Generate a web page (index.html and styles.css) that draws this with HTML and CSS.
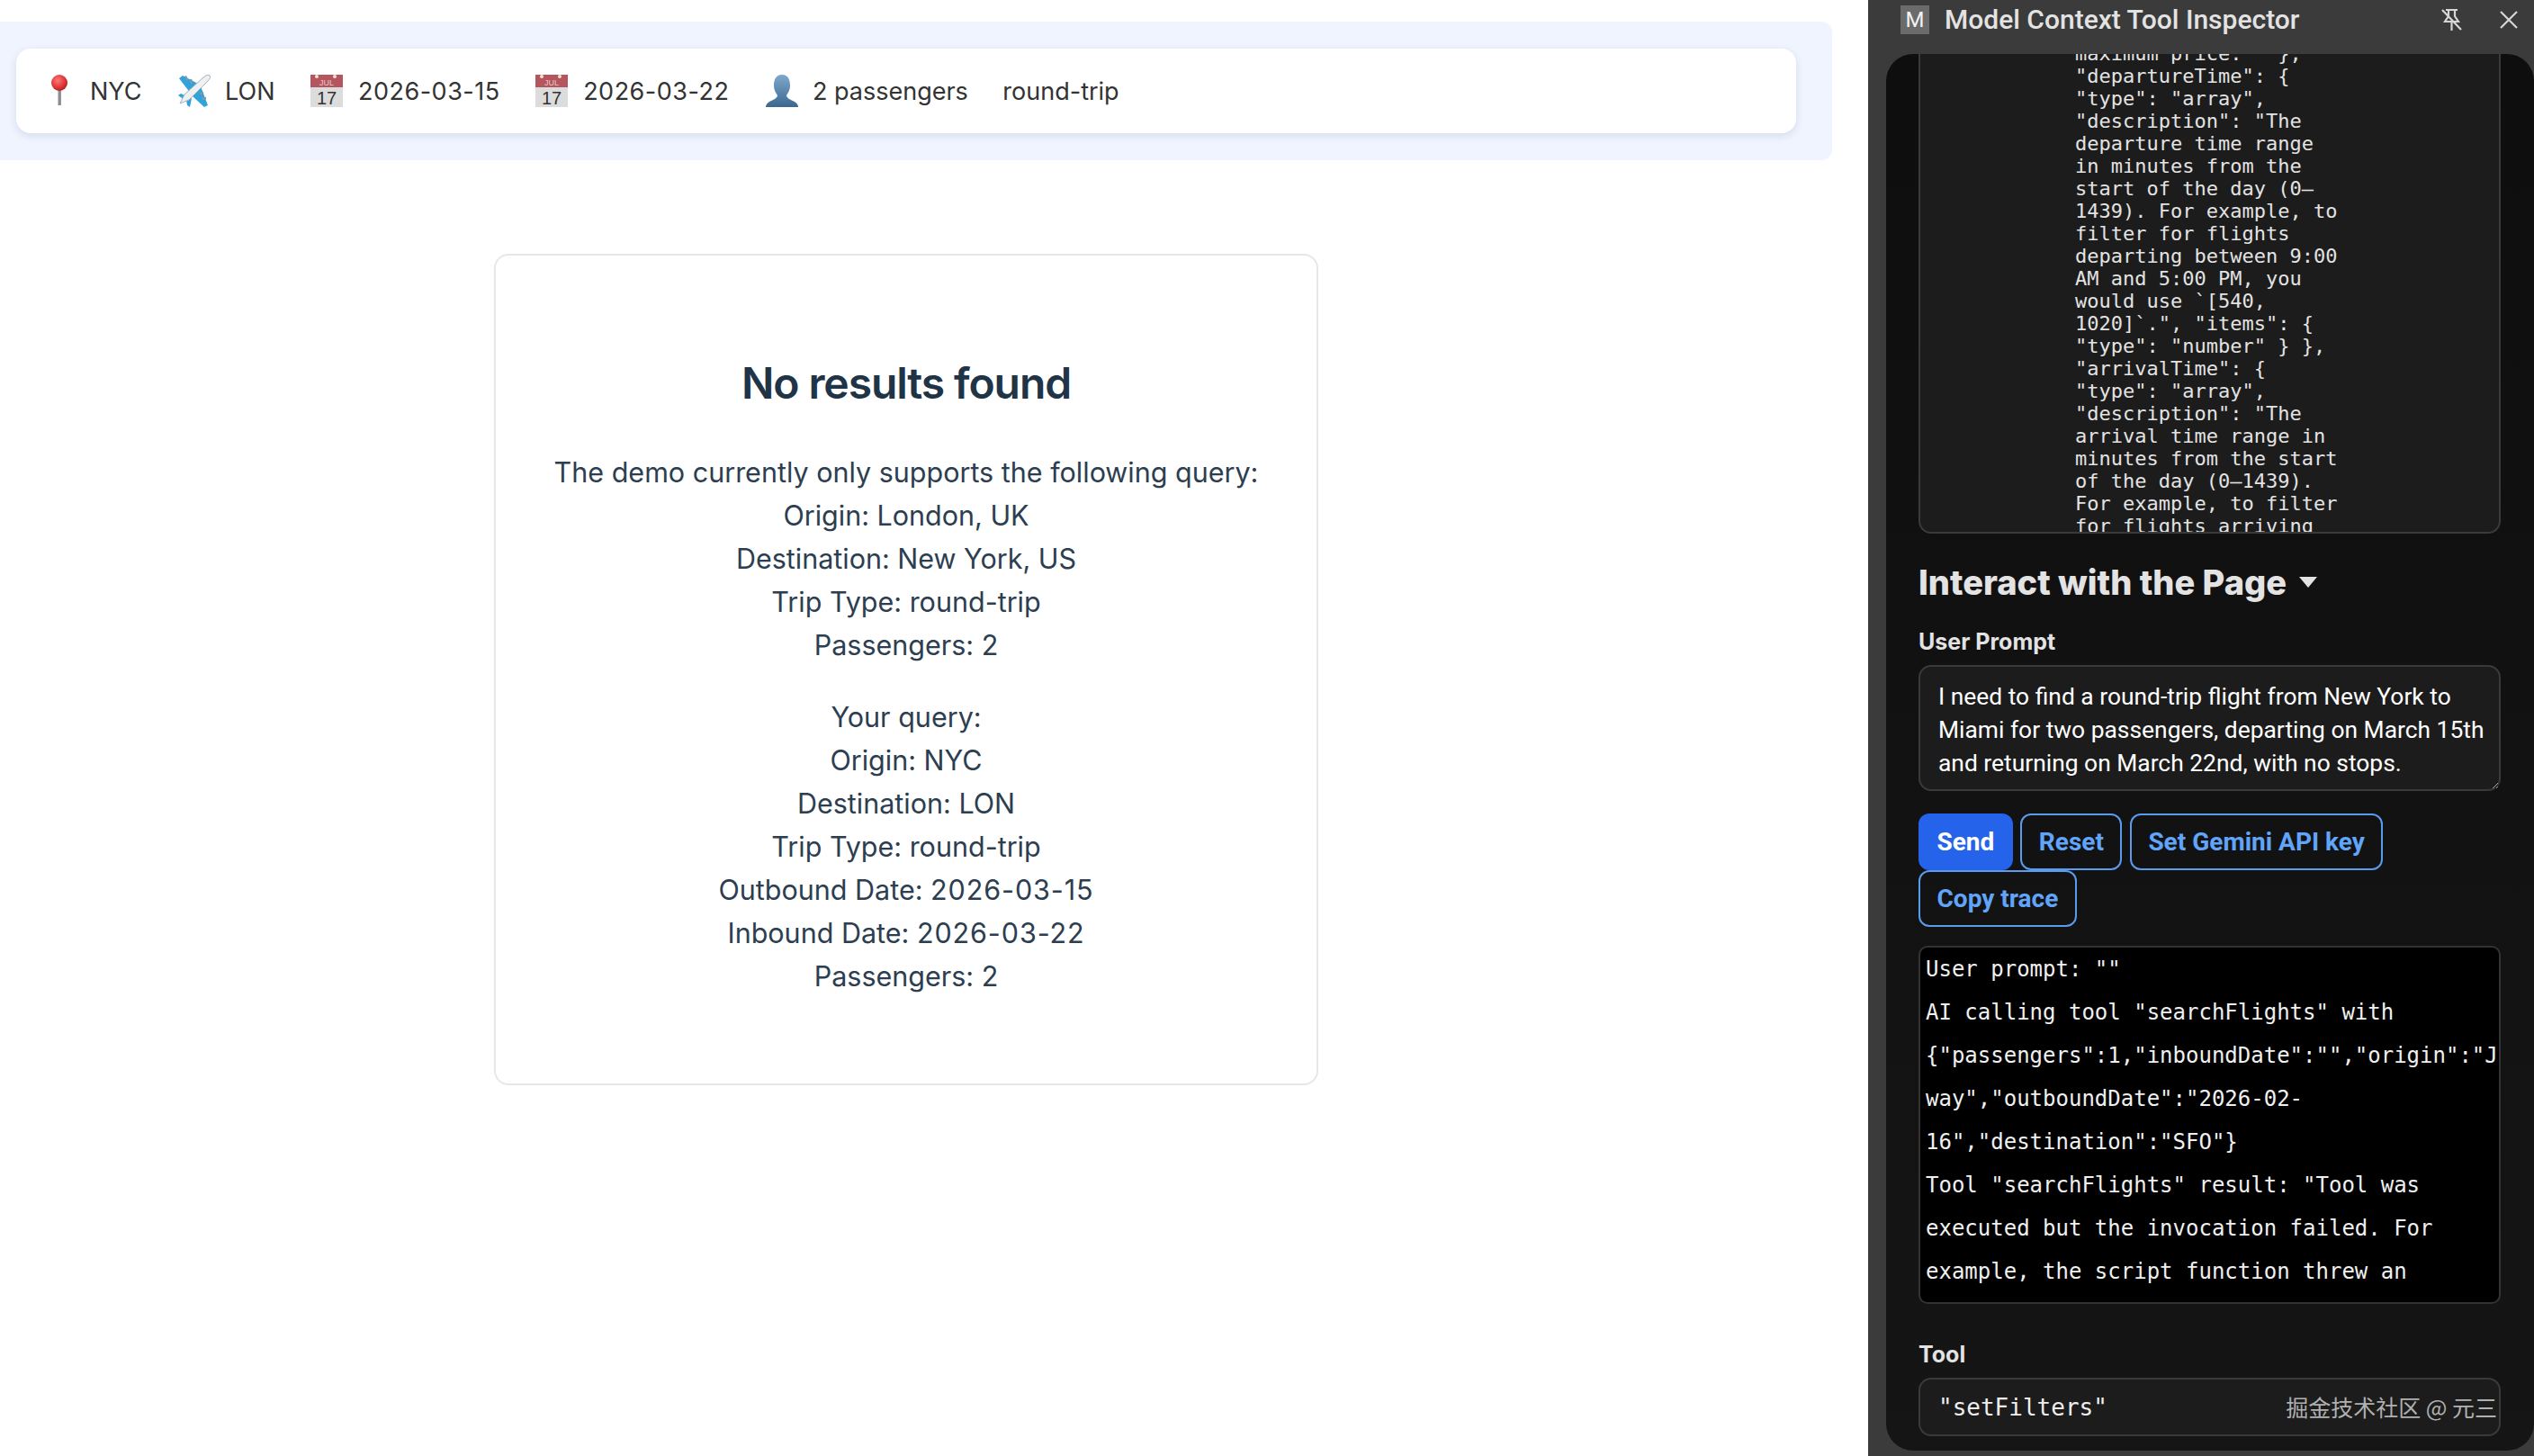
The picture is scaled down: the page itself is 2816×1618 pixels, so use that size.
FILE: index.html
```html
<!DOCTYPE html>
<html lang="en">
<head>
<meta charset="utf-8">
<title>Model Context Tool Inspector</title>
<link rel="stylesheet" href="styles.css">
</head>
<body>
<main class="page">
  <section class="band">
    <div class="bar">
      <div class="chip">
        <svg class="ico" viewBox="0 0 40 40"><defs><radialGradient id="r" cx=".4" cy=".35" r=".7"><stop offset="0" stop-color="#f77"/><stop offset=".6" stop-color="#e03a3a"/><stop offset="1" stop-color="#a82020"/></radialGradient></defs><rect x="18.500" y="18" width="3.400" height="18" fill="#8d8d8d"/><circle cx="20" cy="11" r="9" fill="url(#r)"/></svg>
        <span>NYC</span>
      </div>
      <div class="chip">
        <svg class="ico" viewBox="0 0 40 40"><path d="M3 6 7 3 26 13 16 23ZM35 36 31 38 17 25 27 15Z" fill="#2fa4dc"/><path d="M2 25 5 23 14 27 9 30ZM12 36 15 38 17 28 11 30Z" fill="#2fa4dc"/><path d="M10 3.500 12 8M16 7 17 12M33 28 28 29M30 22 26 23" stroke="#7f98a8" stroke-width="2.400"/><path d="M4 34 9 24 30 5Q35 1 37 3T34 10L14 30Z" fill="#eef0f2" stroke="#a8b0b8" stroke-width="1"/></svg>
        <span>LON</span>
      </div>
      <div class="chip">
        <svg class="ico" viewBox="0 0 40 40"><rect x="1" y="2" width="36" height="14" fill="#b5565f"/><rect x="1" y="16" width="36" height="22" fill="#dcdcdc"/><circle cx="8" cy="4" r="2" fill="#f3e3d0"/><circle cx="28" cy="4" r="2" fill="#f3e3d0"/><text class="cal-m" x="19" y="14">JUL</text><text class="cal-d" x="19" y="35">17</text></svg>
        <span class="num">2026-03-15</span>
      </div>
      <div class="chip">
        <svg class="ico" viewBox="0 0 40 40"><rect x="1" y="2" width="36" height="14" fill="#b5565f"/><rect x="1" y="16" width="36" height="22" fill="#dcdcdc"/><circle cx="8" cy="4" r="2" fill="#f3e3d0"/><circle cx="28" cy="4" r="2" fill="#f3e3d0"/><text class="cal-m" x="19" y="14">JUL</text><text class="cal-d" x="19" y="35">17</text></svg>
        <span class="num">2026-03-22</span>
      </div>
      <div class="chip">
        <svg class="ico" viewBox="0 0 40 40"><defs><linearGradient id="p" x1="0" y1="0" x2="0" y2="1"><stop offset="0" stop-color="#7fa8cd"/><stop offset="1" stop-color="#3c678f"/></linearGradient></defs><path d="M20 2C27 2 29 8 29 14C29 20 26 23 25 25C25 28 30 30 34 32C37 34 38 36 38 38H2C2 36 3 34 6 32C10 30 15 28 15 25C14 23 11 20 11 14C11 8 13 2 20 2Z" fill="url(#p)"/></svg>
        <span>2 passengers</span>
      </div>
      <div class="chip"><span>round-trip</span></div>
    </div>
  </section>
  <article class="card">
    <h2>No results found</h2>
    <p>The demo currently only supports the following query:<br>Origin: London, UK<br>Destination: New York, US<br>Trip Type: round-trip<br>Passengers: 2</p>
    <p>Your query:<br>Origin: NYC<br>Destination: LON<br>Trip Type: round-trip<br>Outbound Date: <span class="num wide">2026-03-15</span><br>Inbound Date: <span class="num wide">2026-03-22</span><br>Passengers: 2</p>
  </article>
</main>
<aside class="panel">
  <header class="head">
    <span class="logo">M</span>
    <span class="title">Model Context Tool Inspector</span>
    <svg class="pin" viewBox="0 0 24 26"><path d="M6 2H19M9 2V9L5 15H20L16 9V2M12.500 15V25M2 2 23 24" fill="none" stroke="#d6d6d6" stroke-width="2.200"/></svg>
    <svg class="close" viewBox="0 0 20 20"><path d="M1 1 19 19M19 1 1 19" stroke="#d6d6d6" stroke-width="2.200"/></svg>
  </header>
  <div class="inner">
    <pre class="schema">maximum price."  },
"departureTime": {
"type": "array",
"description": "The
departure time range
in minutes from the
start of the day (0–
1439). For example, to
filter for flights
departing between 9:00
AM and 5:00 PM, you
would use `[540,
1020]`.", "items": {
"type": "number" } },
"arrivalTime": {
"type": "array",
"description": "The
arrival time range in
minutes from the start
of the day (0–1439).
For example, to filter
for flights arriving</pre>
    <h3 class="section">Interact with the Page <i class="caret"></i></h3>
    <label class="lab" for="prompt">User Prompt</label>
    <textarea class="prompt" id="prompt">I need to find a round-trip flight from New York to Miami for two passengers, departing on March 15th and returning on March 22nd, with no stops.</textarea>
    <div class="btns">
      <button class="btn primary">Send</button>
      <button class="btn">Reset</button>
      <button class="btn">Set Gemini API key</button>
      <button class="btn">Copy trace</button>
    </div>
    <pre class="trace">User prompt: ""
AI calling tool "searchFlights" with
{"passengers":1,"inboundDate":"","origin":"J
way","outboundDate":"2026-02-
16","destination":"SFO"}
Tool "searchFlights" result: "Tool was
executed but the invocation failed. For
example, the script function threw an</pre>
    <div class="lab tool-lab">Tool</div>
    <div class="tool">"setFilters"<span class="mark">掘金技术社区 @ 元三</span></div>
  </div>
</aside>
</body>
</html>
```
FILE: styles.css
```css
* { box-sizing: border-box; }
html, body { margin: 0; height: 100%; }
body { display: flex; height: 1618px; overflow: hidden; background: #fff; font-family: Inter, "Liberation Sans", sans-serif; }
.page { flex: 0 0 2076px; padding-top: 24px; }
.band { width: 2036px; height: 154px; padding: 30px 40px 30px 18px; background: #eff4fe; border-radius: 0 12px 12px 0; }
.bar { height: 94px; display: flex; align-items: center; gap: 38.500px; padding-left: 28px; background: #fff; border-radius: 16px; box-shadow: 0 3px 8px rgba(60,80,120,.14); font-size: 27px; color: #333; }
.chip { display: flex; align-items: center; gap: 14px; }
.ico { width: 40px; height: 40px; flex: none; }
.num { letter-spacing: .5px; }
.num.wide { letter-spacing: .9px; }
.cal-m { font: 9px "Liberation Sans", sans-serif; fill: #e8c8c8; text-anchor: middle; }
.cal-d { font: 20px "Liberation Sans", sans-serif; fill: #333; text-anchor: middle; }
.card { width: 916px; height: 924px; margin: 104px 0 0 549px; padding: 112px 30px 0; border: 2px solid #e5e7eb; border-radius: 16px; text-align: center; color: #2c3e50; }
.card h2 { margin: 0 0 45px; font-size: 48px; line-height: 60px; font-weight: 600; letter-spacing: -1.100px; color: #1f3447; }
.card p { margin: 0 0 32px; font-size: 30.500px; line-height: 48px; }
.panel { flex: 0 0 740px; min-width: 0; background: #3b3b3b; padding-left: 20px; color: #e3e3e3; font-family: Roboto, "Liberation Sans", sans-serif; }
.head { height: 60px; margin-left: -20px; display: flex; align-items: center; padding: 0 18px 17px 36px; }
.logo { width: 32px; height: 32px; background: #6b6b6b; color: #f2f2f2; display: flex; align-items: center; justify-content: center; font-size: 24px; }
.title { margin-left: 17px; font-size: 30px; font-weight: 500; }
.pin { width: 24px; height: 26px; margin-left: auto; }
.close { width: 20px; height: 20px; margin-left: 42px; }
.inner { height: 1552px; padding: 0 37px 0 36px; overflow: hidden; background: linear-gradient(#0e0e0e, #151515); border-radius: 30px; }
.schema { height: 546px; margin: -13px 0 0; padding: 0 0 0 172px; overflow: hidden; background: #1c1c1c; border: 2px solid #3a3a3a; border-top: 0; border-radius: 0 0 14px 14px; font: 22px/25px "DejaVu Sans Mono", monospace; color: #e3e3e3; }
.section { margin: 32px 0 0; font: 800 38px/44px Inter, sans-serif; display: flex; align-items: center; }
.caret { width: 0; height: 0; margin-left: 14px; border: 10px solid transparent; border-top: 12px solid #e3e3e3; border-bottom: 0; }
.lab { display: block; margin-top: 28px; font: 700 25px/32px Inter, sans-serif; }
.prompt { display: block; width: 100%; height: 140px; margin-top: 10px; padding: 15px 10px 0 20px; background: #1c1c1c; border: 2px solid #3a3a3a; border-radius: 14px; color: #fff; font: 26.400px/37px Roboto, sans-serif; overflow: hidden; outline: 0; }
.btns { display: flex; flex-wrap: wrap; gap: 0 8.500px; margin-top: 25px; }
.btn { height: 63px; padding: 0 18.500px; background: transparent; border: 2px solid #5b9bee; border-radius: 12px; color: #60a5fa; font: 700 28px Roboto, sans-serif; }
.btn.primary { background: #2563eb; border-color: #2563eb; color: #fff; }
.trace { height: 398px; margin: 21px 0 0; padding: 0 0 0 6px; overflow: hidden; background: #000; border: 2px solid #333; border-radius: 10px; font: 24px/48px "DejaVu Sans Mono", monospace; color: #f0f0f0; }
.tool-lab { margin-top: 40px; }
.tool { position: relative; height: 65px; margin-top: 10px; padding-left: 20px; display: flex; align-items: center; background: #1c1c1c; border: 2px solid #3a3a3a; border-radius: 14px; color: #eee; font: 26px "DejaVu Sans Mono", monospace; }
.mark { position: absolute; right: 2px; top: 13px; color: #b0b0b0; font: 25px/34px "Noto Sans CJK SC", sans-serif; white-space: nowrap; }
```
